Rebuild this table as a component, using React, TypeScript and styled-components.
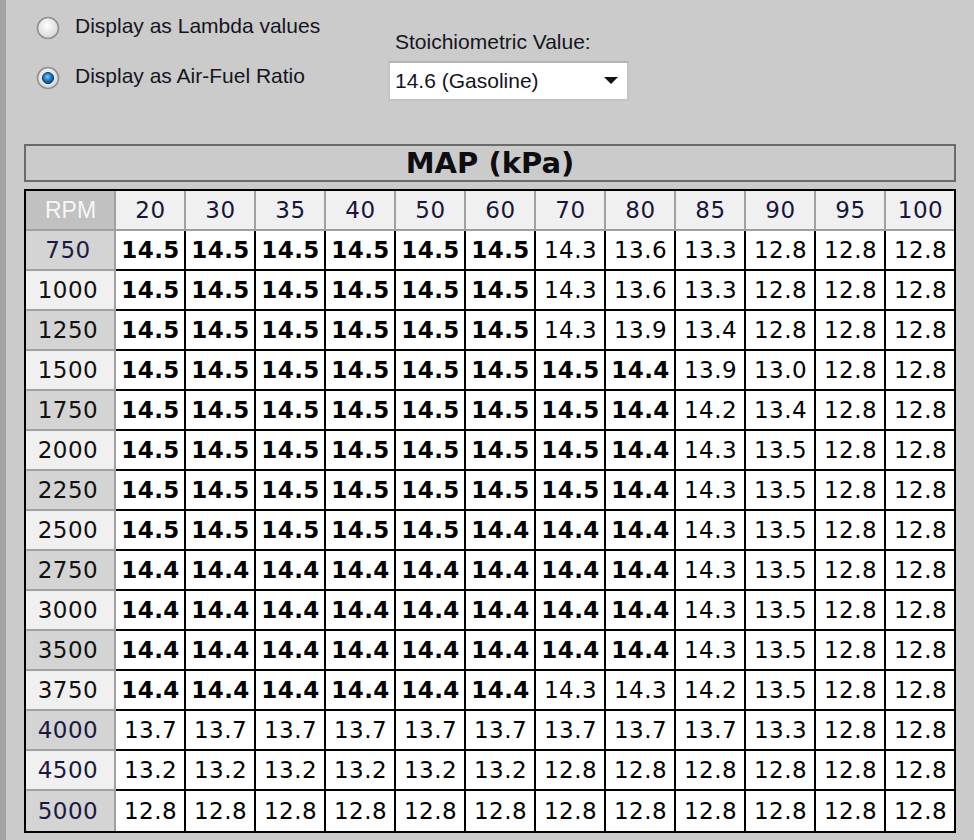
import React from "react";
import styled, { createGlobalStyle } from "styled-components";

const GlobalStyle = createGlobalStyle`
  html, body {
    margin: 0;
    padding: 0;
    background: #cbcbcb;
  }
  body {
    font-family: "Liberation Sans", Arial, sans-serif;
    color: #111;
  }
`;

const Page = styled.div`
  display: flex;
  width: 974px;
  height: 840px;
  background: #cbcbcb;
  overflow: hidden;
`;

const LeftStrip = styled.div`
  width: 6px;
  flex: 0 0 6px;
  background: #a3a3a3;
`;

const Main = styled.div`
  flex: 1;
  padding: 0 18px 0 18px;
  display: flex;
  flex-direction: column;
`;

const TopArea = styled.div`
  height: 144px;
  display: grid;
  grid-template-columns: 364px auto;
  align-items: start;
`;

const RadioGroup = styled.div`
  display: flex;
  flex-direction: column;
  padding-top: 3px;
  margin-left: 12px;
`;

const RadioRow = styled.label`
  height: 50px;
  display: flex;
  align-items: center;
  gap: 15px;
  font-size: 21px;
  color: #15151f;
  cursor: default;
`;

const RadioText = styled.span`
  position: relative;
  top: -2px;
`;

const StoichGroup = styled.div`
  display: flex;
  flex-direction: column;
  padding-top: 30px;
`;

const StoichLabel = styled.div`
  font-size: 21px;
  line-height: 24px;
  padding-left: 7px;
  color: #15151f;
`;

const Dropdown = styled.div`
  margin-top: 7px;
  box-sizing: border-box;
  width: 241px;
  height: 40px;
  background: #fff;
  border: 2px solid #c4c4c4;
  border-top-color: #b4b4b4;
  display: flex;
  align-items: center;
  justify-content: space-between;
  padding: 0 9px 0 5px;
  font-size: 21px;
  color: #15151f;
`;

const MapHeader = styled.div`
  box-sizing: border-box;
  height: 38px;
  border: 2px solid #6b6b6b;
  display: flex;
  align-items: center;
  justify-content: center;
  font-family: "DejaVu Sans", Verdana, sans-serif;
  font-weight: bold;
  font-size: 29px;
  color: #0d0d12;
  margin-bottom: 7px;
`;

const Grid = styled.div`
  display: grid;
  grid-template-columns: 90px repeat(11, 70px) 68px;
  grid-auto-rows: 40px;
  border: 2px solid #000;
  width: 932px;
  box-sizing: border-box;
  font-family: "DejaVu Sans", Verdana, sans-serif;
  font-size: 23px;
  letter-spacing: 0.5px;
  & > :nth-last-child(-n + 13) {
    border-bottom: none;
  }
`;

const BaseCell = styled.div<{ $last?: boolean }>`
  box-sizing: border-box;
  display: flex;
  align-items: center;
  justify-content: center;
  padding-left: 1px;
  border-right: ${(p) => (p.$last ? "none" : "2px solid")};
  border-bottom: 2px solid;
`;

const Corner = styled(BaseCell)`
  background: #c1c1c1;
  color: #f7f7f7;
  border-color: #a0a0a0;
  font-family: "Liberation Sans", Arial, sans-serif;
  font-size: 23px;
  letter-spacing: 0;
`;

const ColHead = styled(BaseCell)`
  background: #f0f0f0;
  color: #17173a;
  border-color: #a0a0a0;
`;

const RowHead = styled(BaseCell)<{ $dark: boolean; $tint: boolean }>`
  background: ${(p) => (p.$dark ? "#d4d4d4" : "#f0f0f0")};
  color: ${(p) => (p.$tint ? "#1a1a40" : "#111")};
  border-color: #a0a0a0;
  padding-left: 0;
  padding-right: 4px;
`;

const DataCell = styled(BaseCell)<{ $bold: boolean }>`
  background: #fff;
  color: #000;
  border-color: #000;
  font-weight: ${(p) => (p.$bold ? "bold" : "normal")};
`;

const cols = [20, 30, 35, 40, 50, 60, 70, 80, 85, 90, 95, 100];

const rows: [number, string[]][] = [
  [750, ["14.5", "14.5", "14.5", "14.5", "14.5", "14.5", "14.3", "13.6", "13.3", "12.8", "12.8", "12.8"]],
  [1000, ["14.5", "14.5", "14.5", "14.5", "14.5", "14.5", "14.3", "13.6", "13.3", "12.8", "12.8", "12.8"]],
  [1250, ["14.5", "14.5", "14.5", "14.5", "14.5", "14.5", "14.3", "13.9", "13.4", "12.8", "12.8", "12.8"]],
  [1500, ["14.5", "14.5", "14.5", "14.5", "14.5", "14.5", "14.5", "14.4", "13.9", "13.0", "12.8", "12.8"]],
  [1750, ["14.5", "14.5", "14.5", "14.5", "14.5", "14.5", "14.5", "14.4", "14.2", "13.4", "12.8", "12.8"]],
  [2000, ["14.5", "14.5", "14.5", "14.5", "14.5", "14.5", "14.5", "14.4", "14.3", "13.5", "12.8", "12.8"]],
  [2250, ["14.5", "14.5", "14.5", "14.5", "14.5", "14.5", "14.5", "14.4", "14.3", "13.5", "12.8", "12.8"]],
  [2500, ["14.5", "14.5", "14.5", "14.5", "14.5", "14.4", "14.4", "14.4", "14.3", "13.5", "12.8", "12.8"]],
  [2750, ["14.4", "14.4", "14.4", "14.4", "14.4", "14.4", "14.4", "14.4", "14.3", "13.5", "12.8", "12.8"]],
  [3000, ["14.4", "14.4", "14.4", "14.4", "14.4", "14.4", "14.4", "14.4", "14.3", "13.5", "12.8", "12.8"]],
  [3500, ["14.4", "14.4", "14.4", "14.4", "14.4", "14.4", "14.4", "14.4", "14.3", "13.5", "12.8", "12.8"]],
  [3750, ["14.4", "14.4", "14.4", "14.4", "14.4", "14.4", "14.3", "14.3", "14.2", "13.5", "12.8", "12.8"]],
  [4000, ["13.7", "13.7", "13.7", "13.7", "13.7", "13.7", "13.7", "13.7", "13.7", "13.3", "12.8", "12.8"]],
  [4500, ["13.2", "13.2", "13.2", "13.2", "13.2", "13.2", "12.8", "12.8", "12.8", "12.8", "12.8", "12.8"]],
  [5000, ["12.8", "12.8", "12.8", "12.8", "12.8", "12.8", "12.8", "12.8", "12.8", "12.8", "12.8", "12.8"]],
];

const tinted = new Set([750, 4000, 4500, 5000]);

const RadioIcon: React.FC<{ checked?: boolean; id: string }> = ({ checked, id }) => (
  <svg width="24" height="24" viewBox="0 0 24 24">
    <defs>
      <radialGradient id={`rg-${id}`} cx="45%" cy="40%" r="60%">
        <stop offset="0%" stopColor="#ffffff" />
        <stop offset="100%" stopColor="#d6d6d6" />
      </radialGradient>
      <radialGradient id={`rb-${id}`} cx="45%" cy="40%" r="60%">
        <stop offset="0%" stopColor="#7fd0ff" />
        <stop offset="45%" stopColor="#1c8ad6" />
        <stop offset="100%" stopColor="#0b3f78" />
      </radialGradient>
    </defs>
    <circle cx="12" cy="12" r="10.5" fill={`url(#rg-${id})`} stroke="#8f9193" strokeWidth="1.6" />
    {checked && (
      <circle cx="12" cy="12" r="5.6" fill={`url(#rb-${id})`} stroke="#1d3f66" strokeWidth="1" />
    )}
  </svg>
);

export default function App() {
  return (
    <>
      <GlobalStyle />
      <Page>
        <LeftStrip />
        <Main>
          <TopArea>
            <RadioGroup>
              <RadioRow>
                <RadioIcon id="a" />
                <RadioText>Display as Lambda values</RadioText>
              </RadioRow>
              <RadioRow>
                <RadioIcon id="b" checked />
                <RadioText>Display as Air-Fuel Ratio</RadioText>
              </RadioRow>
            </RadioGroup>
            <StoichGroup>
              <StoichLabel>Stoichiometric Value:</StoichLabel>
              <Dropdown>
                <span>14.6 (Gasoline)</span>
                <svg width="14" height="8" viewBox="0 0 14 8">
                  <polygon points="0,0 14,0 7,7" fill="#111" />
                </svg>
              </Dropdown>
            </StoichGroup>
          </TopArea>
          <MapHeader>MAP (kPa)</MapHeader>
          <Grid>
            <Corner>RPM</Corner>
            {cols.map((c, i) => (
              <ColHead key={c} $last={i === cols.length - 1}>
                {c}
              </ColHead>
            ))}
            {rows.map(([rpm, vals], ri) => (
              <React.Fragment key={rpm}>
                <RowHead $dark={ri % 2 === 0} $tint={tinted.has(rpm)}>
                  {rpm}
                </RowHead>
                {vals.map((v, ci) => (
                  <DataCell
                    key={ci}
                    $bold={parseFloat(v) >= 14.4}
                    $last={ci === vals.length - 1}
                  >
                    {v}
                  </DataCell>
                ))}
              </React.Fragment>
            ))}
          </Grid>
        </Main>
      </Page>
    </>
  );
}
